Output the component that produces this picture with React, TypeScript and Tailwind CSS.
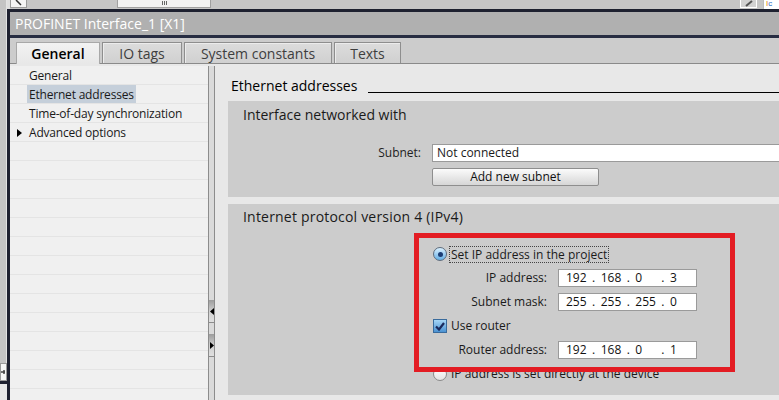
import React from "react";

function IpField({ parts }: { parts: string[] }) {
  return (
    <div className="w-[139px] h-[18px] bg-white border border-[#9a9a9a] flex items-center pl-[7px] text-[12px] leading-none text-[#111]">
      {parts.map((p, i) => (
        <React.Fragment key={i}>
          <span className="w-[27px]">{p}</span>
          {i < 3 && <span className="w-[9px]">.</span>}
        </React.Fragment>
      ))}
    </div>
  );
}

function Radio({ checked }: { checked: boolean }) {
  return checked ? (
    <div className="w-[14px] h-[14px] rounded-full border border-[#5d6b7c] bg-linear-to-b from-[#d9f0ff] to-[#62aee4] flex items-center justify-center shrink-0">
      <div className="w-[5px] h-[5px] rounded-full bg-[#1b3d74]" />
    </div>
  ) : (
    <div className="w-[14px] h-[14px] rounded-full border border-[#8a8a8a] bg-linear-to-b from-[#ffffff] to-[#e4e4e4] shrink-0" />
  );
}

export default function App() {
  const navItems = [
    { label: "General" },
    { label: "Ethernet addresses", selected: true },
    { label: "Time-of-day synchronization" },
    { label: "Advanced options", arrow: true },
  ];
  const rows = Array.from({ length: 18 }, (_, i) => navItems[i]);

  return (
    <div className="w-[779px] h-[400px] overflow-hidden flex bg-[#e8e8e8] relative font-['Open_Sans','Noto_Sans',sans-serif] text-[12px] text-[#1a1a1a]">
      {/* far-left strip */}
      <div className="w-[7px] flex flex-col shrink-0">
        <div className="h-[363px] bg-[#c4c4c4] border-r border-[#e2e2e2]" />
        <div className="h-[18px] bg-[#f6f6f6] border border-[#9a9a9a] relative overflow-hidden">
          <svg width="7" height="16" className="absolute left-0 top-0">
            <line x1="0" y1="8" x2="4" y2="8" stroke="#444" strokeWidth="1.5" />
            <line x1="3" y1="6" x2="3" y2="10" stroke="#444" strokeWidth="1.5" />
          </svg>
        </div>
        <div className="h-[3px] bg-[#1e2130]" />
        <div className="flex-1 bg-[#e8e8e8]" />
      </div>

      {/* main column */}
      <div className="flex-1 flex flex-col min-w-0">
        {/* top scroll strip */}
        <div className="h-[9px] bg-[#c6c6c6] flex items-start shrink-0">
          <div className="w-[3px] h-full bg-[#dedede]" />
          <div className="w-[17px] h-[8px] bg-[#f4f4f4] border border-t-0 border-[#9a9a9a] relative overflow-hidden">
            <svg width="17" height="8" className="absolute left-0 top-0">
              <line x1="5" y1="0" x2="10" y2="5" stroke="#333" strokeWidth="1.5" />
            </svg>
          </div>
          <div className="w-[90px]" />
          <div className="w-[94px] h-[8px] bg-[#f2f2f2] border border-t-0 border-[#a0a0a0] flex justify-center">
            <div className="flex gap-[1px] h-[4px] mt-[1px]">
              <div className="w-px bg-[#666]" />
              <div className="w-px bg-[#666]" />
              <div className="w-px bg-[#666]" />
            </div>
          </div>
          <div className="flex-1" />
          <div className="w-[17px] h-[8px] bg-[#d2d2d2] border border-t-0 border-white relative">
            <svg width="17" height="8" className="absolute left-0 top-0">
              <line x1="5" y1="6" x2="11" y2="1" stroke="#555" strokeWidth="2" />
            </svg>
          </div>
          <div className="w-[6px]" />
          <div className="w-[16px] h-[9px] bg-white border-l border-[#bbb] text-[8px] leading-[8px] pl-[2px] font-['Liberation_Sans',sans-serif]">
            <span className="text-[#e08a00]">I</span>
            <span className="text-[#1e6cc0]">c</span>
          </div>
        </div>

        {/* framed area */}
        <div className="flex-1 flex flex-col border-l-[3px] border-[#1e2130] min-h-0">
          <div className="h-[3px] bg-[#1e2130] shrink-0" />
          <div className="h-[23px] bg-[#b0b0b0] flex items-center pl-[5px] text-white text-[14px] shrink-0">
            PROFINET Interface_1 [X1]
          </div>
          <div className="h-[3px] bg-[#272d42] shrink-0" />
          {/* tabs */}
          <div className="h-[26px] bg-[#cccccc] border-b border-[#8a8a8a] flex items-end pl-[6px] gap-[2px] shrink-0">
            <div className="w-[84px] h-[22px] -mb-px bg-linear-to-b from-[#f2f2f2] to-[#e8e8e8] border border-b-0 border-[#a8a8a8] flex items-center justify-center text-[14px] font-semibold text-black">
              General
            </div>
            <div className="w-[80px] h-[21px] bg-linear-to-b from-[#dcdcdc] to-[#d0d0d0] border border-b-0 border-[#8e8e8e] shadow-[inset_1px_1px_0_#ececec] flex items-center justify-center text-[14px] text-[#3e3e3e]">
              IO tags
            </div>
            <div className="w-[148px] h-[21px] bg-linear-to-b from-[#dcdcdc] to-[#d0d0d0] border border-b-0 border-[#8e8e8e] shadow-[inset_1px_1px_0_#ececec] flex items-center justify-center text-[14px] text-[#3e3e3e]">
              System constants
            </div>
            <div className="w-[67px] h-[21px] bg-linear-to-b from-[#dcdcdc] to-[#d0d0d0] border border-b-0 border-[#8e8e8e] shadow-[inset_1px_1px_0_#ececec] flex items-center justify-center text-[14px] text-[#3e3e3e]">
              Texts
            </div>
          </div>

          {/* content */}
          <div className="flex-1 flex min-h-0 pt-[2px]">
            {/* nav */}
            <div className="w-[198px] bg-[#f0f0f0] flex flex-col shrink-0">
              {rows.map((item, i) => (
                <div key={i} className="h-[19px] border-b border-[#e4e4e4] flex items-stretch shrink-0 relative">
                  {item?.arrow && (
                    <svg width="5" height="8" className="absolute left-[7px] top-[6px]">
                      <polygon points="0,0 5,4 0,8" fill="#000" />
                    </svg>
                  )}
                  {item && (
                    <span
                      className={
                        "ml-[17px] px-[2px] pt-px flex items-center tracking-[-0.2px] " +
                        (item.selected ? "bg-[#c5cfda]" : "")
                      }
                    >
                      {item.label}
                    </span>
                  )}
                </div>
              ))}
            </div>

            {/* splitter */}
            <div className="w-[7px] border-l border-r border-[#8c8c8c] bg-[#dadada] flex flex-col shrink-0">
              <div className="h-[234px]" />
              <div className="h-[23px] bg-linear-to-b from-[#9c9c9c] via-[#cfcfcf] to-[#e0e0e0] border-b border-[#8c8c8c] flex items-center justify-center">
                <svg width="4" height="7">
                  <polygon points="4,0 0,3.5 4,7" fill="#000" />
                </svg>
              </div>
              <div className="h-[11px]" />
              <div className="h-[23px] bg-linear-to-b from-[#9c9c9c] via-[#cfcfcf] to-[#e0e0e0] border-b border-[#8c8c8c] flex items-center justify-center">
                <svg width="4" height="7">
                  <polygon points="0,0 4,3.5 0,7" fill="#000" />
                </svg>
              </div>
            </div>

            {/* right pane */}
            <div className="flex-1 min-w-0 overflow-hidden flex flex-col pl-[13px]">
              <div className="h-[35px] flex items-start pt-[12px] pl-[3px] shrink-0">
                <span className="text-[14px] leading-[16px] text-black whitespace-nowrap">Ethernet addresses</span>
                <div className="flex-1 h-px bg-black ml-[11px] mt-[14px]" />
              </div>

              {/* section 1 */}
              <div className="w-[600px] h-[96px] bg-[#cccccc] flex flex-col shrink-0 pt-[6px]">
                <div className="pl-[15px] text-[14px] leading-[16px] font-medium text-[#1a1a1a]">Interface networked with</div>
                <div className="flex items-center mt-[21px]">
                  <div className="w-[193px] text-right text-[#222]">Subnet:</div>
                  <div className="ml-[11px] w-[380px] h-[18px] bg-white border border-[#9a9a9a] flex items-center pl-[4px]">Not connected</div>
                </div>
                <div className="flex mt-[6px] pl-[204px]">
                  <div className="w-[167px] h-[18px] rounded-[2px] border border-[#8e8e8e] bg-linear-to-b from-[#fbfbfb] to-[#d6d6d6] flex items-center justify-center text-[#111]">
                    Add new subnet
                  </div>
                </div>
              </div>

              <div className="h-[7px] shrink-0" />

              {/* section 2 */}
              <div className="w-[600px] h-[191px] bg-[#cccccc] flex flex-col shrink-0 pt-[5px]">
                <div className="pl-[15px] text-[14px] leading-[16px] font-medium text-[#1a1a1a] tracking-[0.2px]">Internet protocol version 4 (IPv4)</div>
                <div className="mt-[17px] pl-[205px] flex flex-col">
                  <div className="h-[24px] flex items-center">
                    <Radio checked />
                    <span className="ml-[2px] px-px border border-dotted border-[#444] leading-[15px]">Set IP address in the project</span>
                  </div>
                  <div className="h-[24px] flex items-center">
                    <div className="w-[114px] text-right">IP address:</div>
                    <div className="ml-[11px]"><IpField parts={["192", "168", "0", "3"]} /></div>
                  </div>
                  <div className="h-[24px] flex items-center">
                    <div className="w-[114px] text-right">Subnet mask:</div>
                    <div className="ml-[11px]"><IpField parts={["255", "255", "255", "0"]} /></div>
                  </div>
                  <div className="h-[24px] flex items-center">
                    <div className="w-[14px] h-[14px] border border-[#3a6b9c] bg-linear-to-b from-[#a6d6f6] to-[#4a92d2] flex items-center justify-center">
                      <svg width="10" height="9" viewBox="0 0 10 9">
                        <path d="M1 4.5 L4 7.5 L9 1" stroke="#1a2a5c" strokeWidth="2.2" fill="none" />
                      </svg>
                    </div>
                    <span className="ml-[4px]">Use router</span>
                  </div>
                  <div className="h-[24px] flex items-center">
                    <div className="w-[114px] text-right">Router address:</div>
                    <div className="ml-[11px]"><IpField parts={["192", "168", "0", "1"]} /></div>
                  </div>
                  <div className="h-[24px] flex items-center">
                    <Radio checked={false} />
                    <span className="ml-[4px]">IP address is set directly at the device</span>
                  </div>
                </div>
              </div>
            </div>
          </div>
        </div>
      </div>

      {/* red annotation rectangle */}
      <div className="absolute left-[414px] top-[233px] w-[321px] h-[139px] border-[5px] border-[#e31c23] pointer-events-none" />
    </div>
  );
}
